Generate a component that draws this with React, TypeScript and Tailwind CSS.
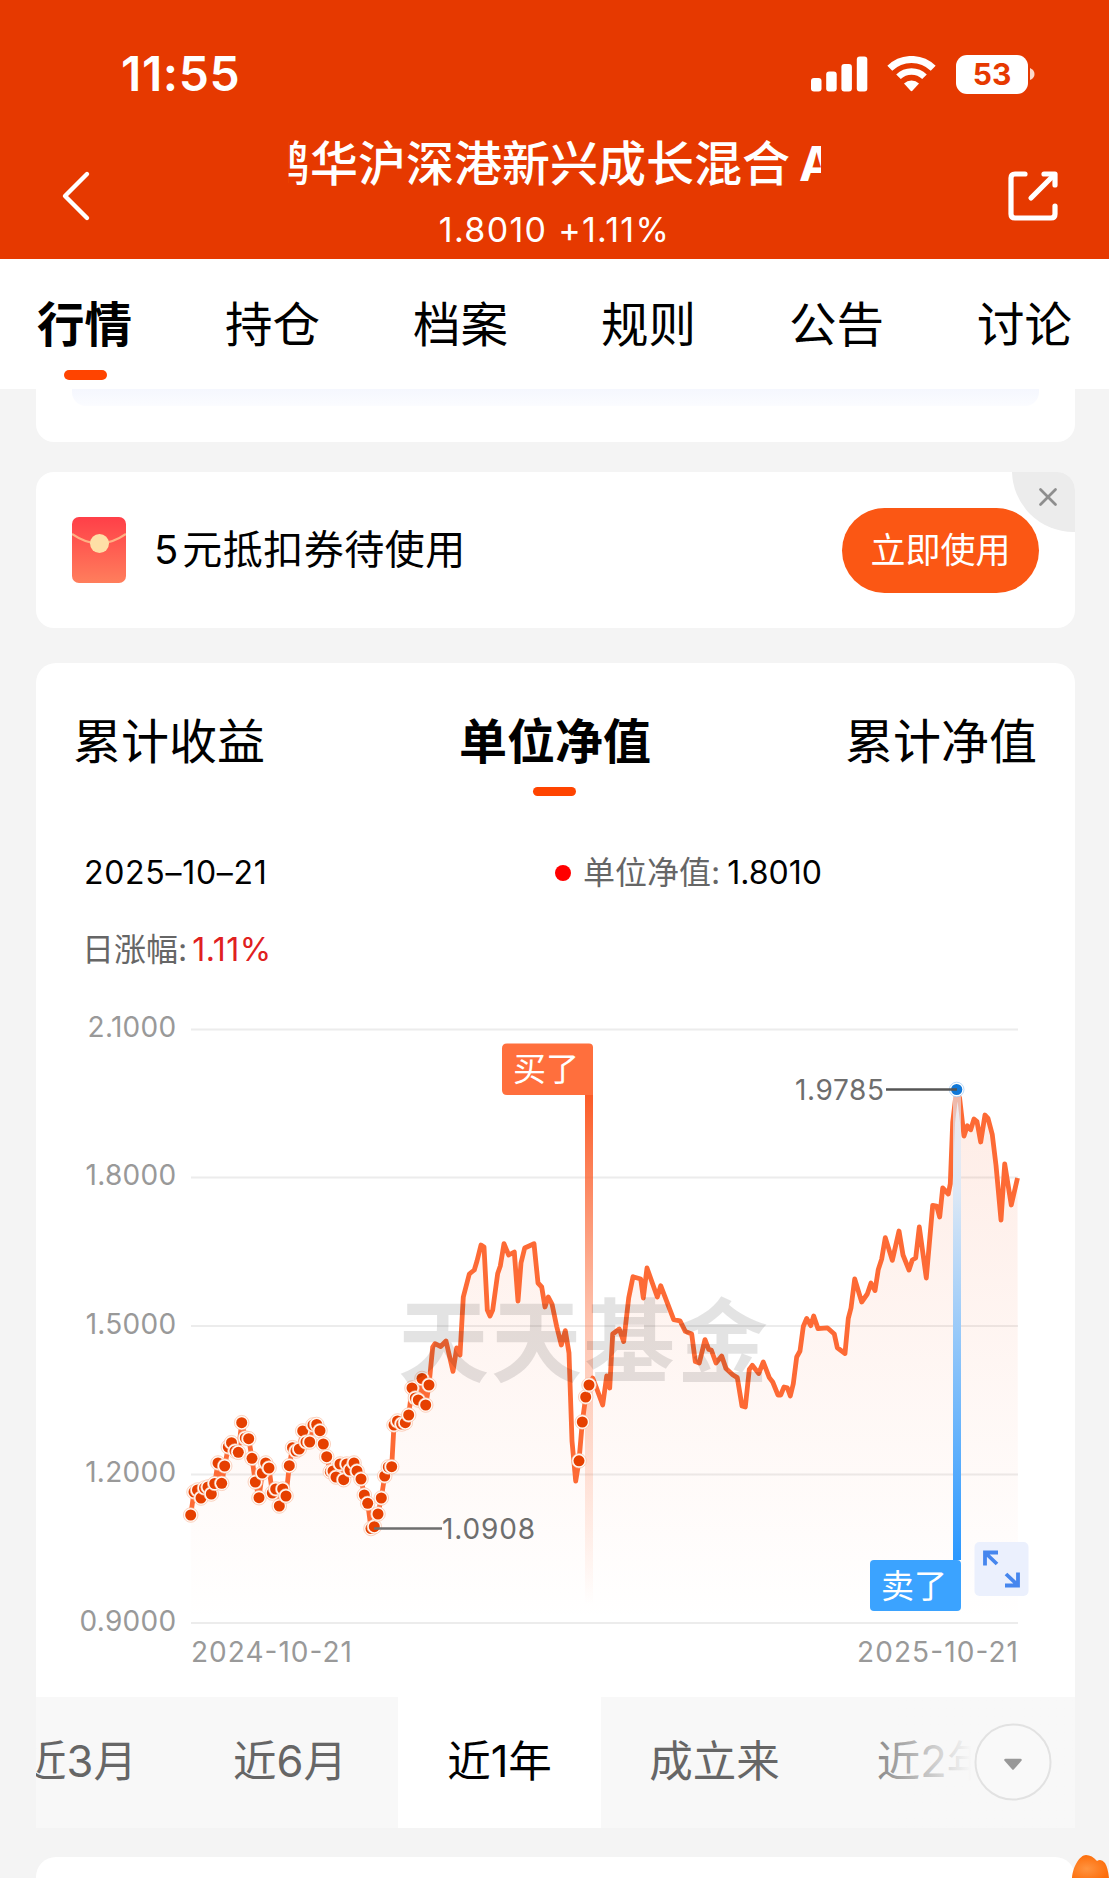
import { X } from "lucide-react";

const tabs = ["行情", "持仓", "档案", "规则", "公告", "讨论"];

const periods = [
  { label: "近3月", width: "w-[204px] -ml-[58px]" },
  { label: "近6月", width: "w-[216px]" },
  { label: "近1年", width: "w-[203px]", active: true },
  { label: "成立来", width: "w-[227px]" },
  { label: "近2年", width: "w-[211px]" },
];

const gridLines = [
  { y: 1029.5, label: "2.1000" },
  { y: 1177.5, label: "1.8000" },
  { y: 1326, label: "1.5000" },
  { y: 1474.5, label: "1.2000" },
  { y: 1623, label: "0.9000" },
];

// Days with a purchase, each one gets a dot on the line
const buyPoints: number[][] = [
  [190.7, 1515], [194, 1492], [197.5, 1490], [201, 1498], [204.5, 1488], [208, 1487],
  [211.3, 1494], [214.7, 1483.5], [218, 1463], [221.7, 1483.3], [224.7, 1466],
  [228.3, 1447], [231.5, 1442.7], [235, 1451], [238.3, 1452.3], [241.7, 1422.7],
  [245.3, 1438], [248.7, 1438.7], [252, 1458.3], [255.3, 1482], [259, 1497.7],
  [262.3, 1473], [265.7, 1463], [269, 1468], [272.3, 1493], [275.7, 1489],
  [279.3, 1506], [282.7, 1489], [286, 1496], [289.3, 1465.7], [292.5, 1447.7],
  [296, 1451], [299.3, 1449], [302.7, 1431], [306, 1442], [309.7, 1442],
  [313, 1425], [316.7, 1424.5], [320, 1430.7], [323.3, 1444], [326.7, 1456.7],
  [330.3, 1471.7], [333, 1471], [336, 1477], [340, 1464], [343.7, 1479.7],
  [346.7, 1464], [350, 1470], [354, 1463], [357, 1471], [361, 1479],
  [364.3, 1495], [367.7, 1503.3], [371, 1528.5], [374.3, 1526.7], [378, 1514],
  [381.3, 1498], [384.7, 1476], [388.3, 1467], [391.7, 1466.7], [394, 1425],
  [397.5, 1421], [401.7, 1424], [405.3, 1422.7], [408.7, 1415], [412, 1388],
  [415.3, 1398], [418.3, 1400], [422, 1378.5], [425.7, 1405], [429, 1385],
];

const laterBuys: number[][] = [
  [579, 1460.8], [582.3, 1422], [585.7, 1397], [589, 1385],
];

const restOfLine: number[][] = [
  [432.7, 1347], [435, 1343.7], [440.7, 1346.5], [446, 1341], [453, 1371.4],
  [456.7, 1347.8], [460, 1355], [463.3, 1297], [469.3, 1274], [474.3, 1270],
  [477, 1261], [481, 1245], [484, 1247], [487.3, 1310], [490, 1316], [492.7, 1310],
  [497.7, 1273.5], [500.3, 1266], [504, 1243.7], [508.7, 1255], [514.3, 1252],
  [518, 1301], [521, 1263], [524.7, 1248], [534, 1243.7], [538, 1283], [541.7, 1287],
  [545, 1307], [548.3, 1297], [552, 1304], [556.7, 1326.5], [561.3, 1345],
  [565.3, 1330.6], [569, 1353], [572, 1441], [575.7, 1481], [579, 1460.8],
  [582.3, 1422], [585.7, 1397], [589, 1385], [592.7, 1378], [596.7, 1388.6],
  [602.7, 1405], [606.7, 1376], [609.7, 1388], [612.7, 1334], [619.3, 1329],
  [623.7, 1341.6], [628.7, 1298], [633, 1276.7], [640.7, 1279], [643.3, 1298],
  [647, 1268], [657.3, 1297], [660.7, 1285.7], [673.7, 1319.6], [680, 1320.8],
  [685.3, 1331.4], [691.7, 1334], [695.3, 1361.6], [699.3, 1363], [705, 1339.6],
  [708.7, 1349.4], [711.3, 1350], [716, 1363], [721.7, 1356], [726, 1368.6],
  [732.7, 1374.7], [737.3, 1377.6], [742, 1406], [745.3, 1407], [749.3, 1369.4],
  [752.3, 1365.3], [758.7, 1373.5], [763.3, 1362], [769.3, 1377.6], [772.7, 1382],
  [778, 1395], [780.7, 1395], [784, 1387], [787.3, 1387.8], [790.3, 1396],
  [793.3, 1383.7], [796.7, 1357], [800, 1351], [803.3, 1326.5], [806.7, 1318.4],
  [810.7, 1325.7], [813.7, 1316], [818, 1328.6], [827.3, 1327.8], [834.3, 1334],
  [837.3, 1347.8], [845, 1353.5], [848.3, 1318.4], [851, 1308], [854.7, 1279],
  [861.7, 1302], [867.3, 1294], [871, 1283], [875, 1290.6], [878.3, 1269.4],
  [881.7, 1259], [885.3, 1237.6], [892.3, 1260.4], [899, 1231], [903, 1255],
  [909, 1270], [912.3, 1260], [915.7, 1258], [919.3, 1227], [926.3, 1278],
  [932.7, 1205.3], [936.7, 1206], [939.7, 1217], [942.7, 1188], [948.3, 1194],
  [950.3, 1183.7], [952.7, 1122.4], [956.3, 1092], [959.6, 1098], [964, 1136],
  [967.3, 1125.7], [970.7, 1129.8], [974, 1119], [977, 1121.6], [980.7, 1142],
  [985, 1115], [988, 1118.4], [992.3, 1134.7], [996, 1165.3], [1001, 1220],
  [1004.7, 1164], [1011.3, 1205], [1017.5, 1178],
];

const linePoints = [...buyPoints, ...restOfLine].map((p) => p.join(",")).join(" ");

function StatusBar() {
  return (
    <div className="flex h-[148px] items-center justify-between pl-[121px] pr-[74px]">
      <span className="text-[48px] font-semibold leading-none tracking-[0.6px]">11:55</span>
      <div className="flex items-center">
        <svg width="57" height="36" viewBox="0 0 57 36" fill="white">
          <rect x="0" y="22" width="10.5" height="13.5" rx="3" />
          <rect x="15.2" y="15.5" width="10.5" height="20" rx="3" />
          <rect x="30.4" y="8" width="10.5" height="27.5" rx="3" />
          <rect x="45.8" y="0.5" width="10.5" height="35" rx="3" />
        </svg>
        <svg className="ml-[19px]" width="49" height="36" viewBox="0 0 49 36" fill="none" stroke="white">
          <path d="M2.8 12.3A31 31 0 0 1 46.2 12.3" strokeWidth="7" />
          <path d="M11.5 20.8A18.5 18.5 0 0 1 37.5 20.8" strokeWidth="6.5" />
          <path d="M17 27.5A11 11 0 0 1 32 27.5L25.6 34.6Q24.5 35.8 23.4 34.6Z" fill="white" stroke="none" />
        </svg>
        <div className="ml-[20px] flex h-[39px] w-[72px] items-center justify-center rounded-[11px] bg-white text-[30px] font-bold leading-none text-[#e63900]">
          53
        </div>
        <svg className="ml-[2px]" width="5" height="12" viewBox="0 0 5 12" fill="#fcd9cc">
          <path d="M0 0Q4.5 2 4.5 6T0 12Z" />
        </svg>
      </div>
    </div>
  );
}

function Header() {
  return (
    <header className="h-[259px] bg-[#e63900] text-white">
      <StatusBar />
      <div className="flex h-[111px] justify-between pl-[60px] pr-[50px]">
        <svg className="mt-[22px]" width="32" height="52" viewBox="0 0 32 52" fill="none" stroke="white" strokeWidth="4.4" strokeLinecap="round" strokeLinejoin="round">
          <path d="M27 4L5 26L27 48" />
        </svg>
        <div className="ml-[10px] flex flex-col items-center">
          <div className="-mt-[12px] w-[533px] overflow-hidden">
            <div className="-ml-[26px] flex w-[600px] items-center whitespace-nowrap text-[48px] font-medium leading-[56px]">
              <span>鹏华沪深港新兴成长混合</span>
              <span className="ml-[9px] font-bold">A</span>
            </div>
          </div>
          <div className="mt-[20px] text-[34px] leading-[36px] tracking-[1.3px]">1.8010 +1.11%</div>
        </div>
        <svg className="mt-[22px]" width="52" height="52" viewBox="0 0 52 52" fill="none" stroke="white" strokeWidth="5.2" strokeLinecap="round" strokeLinejoin="round">
          <path d="M18 4H8Q4 4 4 8V44Q4 48 8 48H44Q48 48 48 44V36" />
          <path d="M37 4H48V15" />
          <path d="M47 5L24 28" />
        </svg>
      </div>
    </header>
  );
}

function Tabs() {
  return (
    <nav className="flex h-[130px] justify-between bg-white pl-[37px] pr-[37px]">
      {tabs.map((tab, i) => (
        <div key={tab} className="flex flex-col items-center">
          <span className={`mt-[38px] text-[47.5px] leading-[56px] ${i === 0 ? "font-bold" : ""}`}>{tab}</span>
          {i === 0 && <span className="ml-[2px] mt-[17px] h-[10px] w-[43px] rounded-[5px] bg-[#ff4400]" />}
        </div>
      ))}
    </nav>
  );
}

function CouponCard() {
  return (
    <section className="relative mt-[30px] flex h-[156px] items-center overflow-hidden rounded-[18px] bg-white pl-[36px] pr-[36px]">
      <svg width="54" height="66" viewBox="0 0 54 66">
        <defs>
          <linearGradient id="envelope" x1="0" y1="0" x2="0" y2="1">
            <stop offset="0" stopColor="#ff3f48" />
            <stop offset="1" stopColor="#ff7e5c" />
          </linearGradient>
        </defs>
        <rect width="54" height="66" rx="7" fill="url(#envelope)" />
        <path d="M0 17Q27 36 54 17" fill="none" stroke="#ffb184" strokeWidth="2.2" />
        <circle cx="27.5" cy="26.5" r="9.5" fill="#fedfa6" />
      </svg>
      <span className="ml-[28px] text-[40px] leading-none text-black">
        5<span className="ml-[4px] tracking-[0.5px]">元抵扣券待使用</span>
      </span>
      <button className="ml-auto h-[85px] w-[197px] rounded-full bg-[#fb5714] text-[35px] leading-none text-white">
        立即使用
      </button>
      <div className="absolute -right-[60px] -top-[63px] size-[123px] rounded-full bg-[#ececec]" />
      <X className="absolute right-[12px] top-[10px] text-[#8e8e8e]" size={30} strokeWidth={2.2} />
    </section>
  );
}

function NavChart() {
  return (
    <svg className="block" width="1039" height="697" viewBox="36 1000 1039 697">
      <defs>
        <linearGradient id="area" gradientUnits="userSpaceOnUse" x1="0" y1="1090" x2="0" y2="1623">
          <stop offset="0" stopColor="#f8602a" stopOpacity="0.12" />
          <stop offset="0.6" stopColor="#f8602a" stopOpacity="0.045" />
          <stop offset="1" stopColor="#f8602a" stopOpacity="0" />
        </linearGradient>
        <linearGradient id="buyPole" x1="0" y1="0" x2="0" y2="1">
          <stop offset="0" stopColor="#fb5c28" />
          <stop offset="0.45" stopColor="#fd6c3a" stopOpacity="0.4" />
          <stop offset="1" stopColor="#ff6c36" stopOpacity="0" />
        </linearGradient>
        <linearGradient id="sellPole" x1="0" y1="0" x2="0" y2="1">
          <stop offset="0" stopColor="#e6e9f2" stopOpacity="0.6" />
          <stop offset="0.2" stopColor="#dde8f5" />
          <stop offset="1" stopColor="#2a98ff" />
        </linearGradient>
      </defs>

      {gridLines.map((line) => (
        <g key={line.label}>
          <line x1="191" x2="1018" y1={line.y} y2={line.y} stroke="#ececec" strokeWidth="2" />
          <text x="176.5" y={line.y + 7.5} textAnchor="end" fontSize="28" letterSpacing="0.3" fill="#999">
            {line.label}
          </text>
        </g>
      ))}
      <text x="191" y="1662" fontSize="28" textLength="161" fill="#999">2024-10-21</text>
      <text x="857" y="1662" fontSize="28" textLength="161" fill="#999">2025-10-21</text>

      <polygon points={`191,1623 ${linePoints} 1018,1623`} fill="url(#area)" />
      <rect x="585" y="1095" width="8" height="510" fill="url(#buyPole)" />
      <polyline points={linePoints} fill="none" stroke="#fd6a35" strokeWidth="4.8" strokeLinejoin="round" />

      {[...buyPoints, ...laterBuys].map(([x, y], i) => (
        <g key={i}>
          <circle cx={x} cy={y} r="7.3" fill="#fffaf5" stroke="#f9b79b" strokeWidth="0.6" />
          <circle cx={x} cy={y} r="5.5" fill="#e64000" />
        </g>
      ))}

      {/* Watermark */}
      <text x="398" y="1375" fontSize="91" fontWeight="700" textLength="370" fill="#000" fillOpacity="0.11">
        天天基金
      </text>

      {/* Lowest and highest values */}
      <line x1="374" x2="442" y1="1528.5" y2="1528.5" stroke="#6e6e6e" strokeWidth="2.6" />
      <text x="442" y="1539" fontSize="28" textLength="93" fill="#6e6e6e">1.0908</text>
      <rect x="953" y="1096" width="8" height="464" fill="url(#sellPole)" />
      <circle cx="956.7" cy="1089.5" r="7.3" fill="white" stroke="#9cc9f3" strokeWidth="0.7" />
      <circle cx="956.7" cy="1089.5" r="5.6" fill="#1078d8" />
      <line x1="886" x2="957" y1="1089.5" y2="1089.5" stroke="#555" strokeWidth="2.6" />
      <text x="795" y="1100" fontSize="28" textLength="89" fill="#6e6e6e">1.9785</text>

      <path d="M507 1043.5H589Q593 1043.5 593 1047.5V1095H507Q502 1095 502 1090V1048.5Q502 1043.5 507 1043.5Z" fill="#ff6f3d" />
      <text x="513" y="1081" fontSize="33" fill="white">买了</text>
      <rect x="870" y="1560" width="91" height="51" rx="4" fill="#3ba3ff" />
      <text x="881" y="1597.5" fontSize="33" fill="white">卖了</text>

      {/* Fullscreen button */}
      <rect x="974.5" y="1542" width="54" height="54" rx="5" fill="#ebf0fd" />
      <g fill="none" stroke="#4686ee" strokeWidth="3.8">
        <path d="M998 1552.5H985V1565.5M985.5 1553L997 1564" />
        <path d="M1018 1572.5V1585.5H1005M1017.5 1585L1006 1574" />
      </g>
    </svg>
  );
}

function PeriodBar() {
  return (
    <div className="relative flex h-[131px] overflow-hidden bg-[#f8f8f8]">
      {periods.map((p) => (
        <div
          key={p.label}
          className={`flex shrink-0 items-center justify-center pb-px text-[43.5px] leading-none ${p.width} ${p.active ? "bg-white text-black" : "text-[#666]"}`}
        >
          {p.label}
        </div>
      ))}
      <div className="absolute inset-y-0 right-0 flex w-[230px] items-center justify-end bg-linear-to-r from-[#f8f8f8]/0 to-[#f8f8f8] to-55% pb-[2px] pr-[23px]">
        <svg width="78" height="78" viewBox="0 0 78 78">
          <circle cx="39" cy="39" r="37.5" fill="#f9f9f9" stroke="#e2e2e2" strokeWidth="2" />
          <path d="M31.5 37H46.500L39 45.5Z" fill="#999" stroke="#999" strokeWidth="2.5" strokeLinejoin="round" />
        </svg>
      </div>
    </div>
  );
}

function ChartCard() {
  return (
    <section className="mt-[35px] overflow-hidden rounded-t-[20px] bg-white">
      <div className="flex h-[137px] justify-between pl-[37px] pr-[38px] text-[48px] leading-[56px] text-black">
        <span className="mt-[51px]">累计收益</span>
        <div className="flex flex-col items-center">
          <span className="mt-[51px] font-bold">单位净值</span>
          <span className="mt-[17px] h-[9px] w-[43px] rounded-[5px] bg-[#ff4400]" />
        </div>
        <span className="mt-[51px]">累计净值</span>
      </div>
      <div className="grid h-[200px] grid-cols-[471px_1fr] content-start gap-y-[37px] pl-[48px] pt-[53px] text-[32px] leading-[40px] text-[#666]">
        <span className="tracking-[0.7px] text-black">2025–10–21</span>
        <div className="flex items-center">
          <span className="size-[16px] rounded-full bg-[#ff0000]" />
          <span className="ml-[12px]">单位净值:</span>
          <span className="ml-[7px] text-black">1.8010</span>
        </div>
        <div className="-ml-[2px] flex items-center">
          <span>日涨幅:</span>
          <span className="ml-[5px] tracking-[0.5px] text-[#e02020]">1.11%</span>
        </div>
      </div>
      <NavChart />
      <PeriodBar />
    </section>
  );
}

export default function App() {
  return (
    <div className="relative h-[1878px] w-[1109px] overflow-hidden bg-[#f4f4f4] font-['Inter','Noto_Sans_CJK_SC',sans-serif]">
      <Header />
      <Tabs />
      <main className="flex flex-col pl-[36px] pr-[34px]">
        <div className="h-[53px] rounded-b-[18px] bg-white px-[36px]">
          <div className="h-[17px] rounded-b-[14px] bg-linear-to-b from-[#f5f7fe] to-[#fbfcff]" />
        </div>
        <CouponCard />
        <ChartCard />
        <div className="mt-[29px] h-[40px] rounded-t-[20px] bg-white" />
      </main>
      {/* Floating flame badge */}
      <svg className="absolute bottom-0 right-0" width="38" height="24" viewBox="0 0 38 24">
        <defs>
          <radialGradient id="flame" cx="0.4" cy="0.6" r="0.6">
            <stop offset="0" stopColor="#ff9440" />
            <stop offset="1" stopColor="#fd6e0c" />
          </radialGradient>
        </defs>
        <path d="M1 24C2 12 9 1 15 1Q21 1 26 7Q30 4 34 9Q37 14 38 24Z" fill="url(#flame)" />
      </svg>
    </div>
  );
}
